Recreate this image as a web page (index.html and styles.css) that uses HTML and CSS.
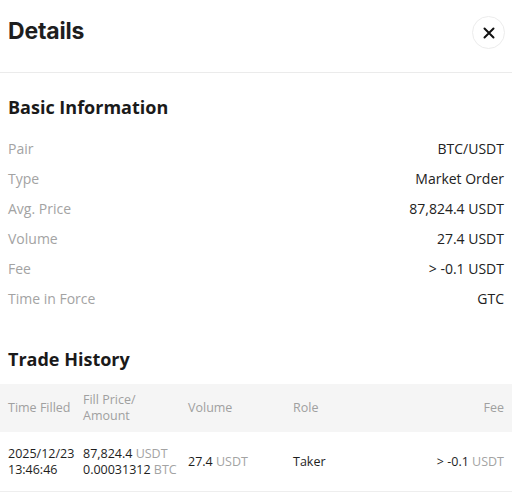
FILE: index.html
```html
<!DOCTYPE html>
<html lang="en">
<head>
    <meta charset="UTF-8">
    <meta name="viewport" content="width=device-width, initial-scale=1.0">
    <title>Order Details</title>
    <link rel="stylesheet" href="styles.css">
</head>
<body>
    <div class="panel">
        <div class="panel-header">
            <h1>Details</h1>
            <button class="close-btn" aria-label="Close">
                <svg width="14" height="14" viewBox="0 0 14 14">
                    <path d="M2.5 2.5 L11.5 11.5 M11.5 2.5 L2.5 11.5" stroke="#111" stroke-width="2" stroke-linecap="round"/>
                </svg>
            </button>
        </div>

        <div class="section">
            <h2>Basic Information</h2>
            <div class="info-list">
                <div class="info-row"><span class="label">Pair</span><span class="value">BTC/USDT</span></div>
                <div class="info-row"><span class="label">Type</span><span class="value">Market Order</span></div>
                <div class="info-row"><span class="label">Avg. Price</span><span class="value">87,824.4 USDT</span></div>
                <div class="info-row"><span class="label">Volume</span><span class="value">27.4 USDT</span></div>
                <div class="info-row"><span class="label">Fee</span><span class="value">&gt; -0.1 USDT</span></div>
                <div class="info-row"><span class="label">Time in Force</span><span class="value">GTC</span></div>
            </div>
        </div>

        <div class="section trades">
            <h2>Trade History</h2>
        </div>
        <div class="trade-table">
            <div class="trade-head">
                <span>Time Filled</span>
                <span class="stack"><span>Fill Price/</span><span>Amount</span></span>
                <span>Volume</span>
                <span>Role</span>
                <span class="right">Fee</span>
            </div>
            <div class="trade-row">
                <span class="stack"><span>2025/12/23</span><span>13:46:46</span></span>
                <span class="stack"><span>87,824.4 <em>USDT</em></span><span>0.00031312 <em>BTC</em></span></span>
                <span>27.4 <em>USDT</em></span>
                <span>Taker</span>
                <span class="right">&gt; -0.1 <em>USDT</em></span>
            </div>
        </div>
    </div>
</body>
</html>
```

FILE: styles.css
```css
* {
    box-sizing: border-box;
}

body {
    margin: 0;
    background: #fff;
    color: #1e1e1e;
    font-family: "Open Sans", "Noto Sans", sans-serif;
}

.panel-header {
    height: 73px;
    padding: 0 8px 7px;
    display: flex;
    align-items: center;
    justify-content: space-between;
    border-bottom: 1px solid #ebebeb;
}

.panel-header h1 {
    margin: 0 0 3px;
    font-family: Inter, sans-serif;
    font-size: 23px;
    font-weight: 700;
    letter-spacing: -0.2px;
}

.close-btn {
    width: 33px;
    height: 33px;
    margin-right: -1px;
    border: 1.5px solid #ececec;
    border-radius: 50%;
    background: #fff;
    display: flex;
    align-items: center;
    justify-content: center;
    padding: 0;
}

.section {
    padding: 20px 8px 0;
}

.section h2 {
    margin: 0;
    font-size: 18px;
    line-height: 28px;
    font-weight: 700;
    color: #1a1a1a;
}

.info-list {
    margin-top: 12px;
}

.info-row {
    height: 30px;
    display: flex;
    align-items: center;
    justify-content: space-between;
    font-size: 14px;
}

.info-row .label {
    color: #a3a3a3;
}

.info-row .value {
    color: #222;
}

.trades {
    padding-top: 32px;
}

.trade-table {
    margin-top: 11px;
    font-size: 12.5px;
}

.trade-head,
.trade-row {
    display: grid;
    grid-template-columns: 75px 105px 105px 1fr 1fr;
    align-items: center;
    padding: 0 8px;
}

.stack {
    display: flex;
    flex-direction: column;
}

.trade-head {
    height: 48px;
    background: #f5f5f5;
    color: #a0a0a0;
    line-height: 16px;
}

.trade-row {
    height: 60px;
    border-bottom: 1px solid #eee;
    color: #1e1e1e;
    line-height: 16px;
}

.trade-row em {
    font-style: normal;
    color: #a3a3a3;
}

.right {
    text-align: right;
}
```
